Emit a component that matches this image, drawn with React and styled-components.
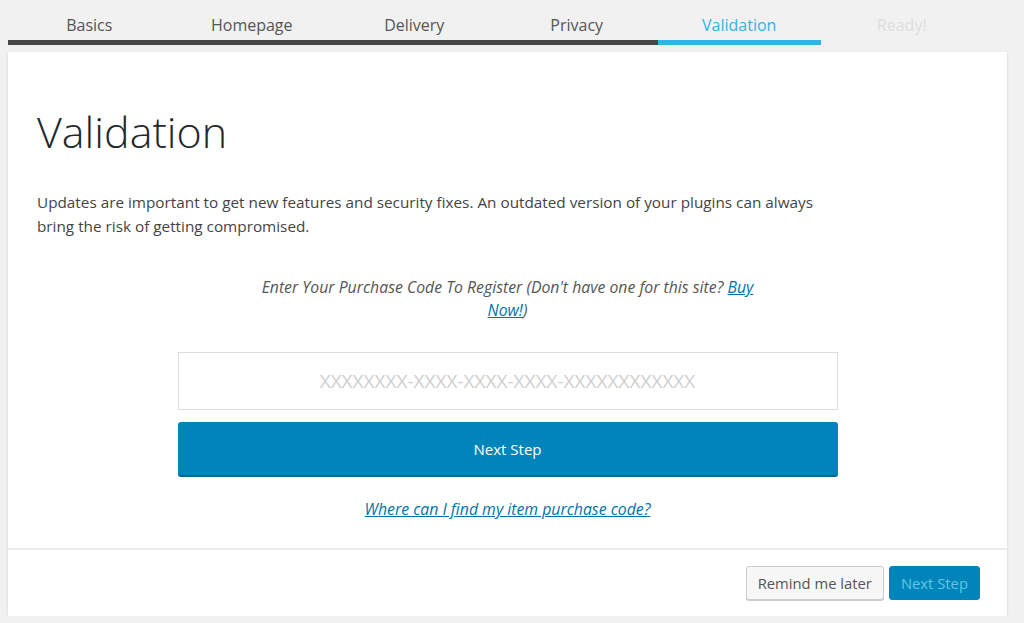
import React from "react";
import styled, { createGlobalStyle } from "styled-components";

const GlobalStyle = createGlobalStyle`
  body {
    margin: 0;
    background: #f1f1f1;
    font-family: "Open Sans", "Noto Sans", sans-serif;
  }
`;

const Page = styled.div`
  padding: 0 8px;
  width: 999px;
`;

const StepList = styled.ol`
  display: flex;
  list-style: none;
  margin: 0;
  padding: 0;
`;

const Step = styled.li`
  width: 162.5px;
  padding-top: 14px;
  padding-bottom: 4px;
  text-align: center;
  font-size: 16px;
  line-height: 22px;
  color: ${(p) => (p.state === "active" ? "#2fb6e6" : p.state === "done" ? "#555" : "#dedede")};
  border-bottom: 5px solid
    ${(p) => (p.state === "active" ? "#2fb6e6" : p.state === "done" ? "#474747" : "transparent")};
`;

const Card = styled.div`
  margin-top: 7px;
  background: #fff;
  box-shadow: 0 1px 3px rgba(0, 0, 0, 0.13);
`;

const Content = styled.section`
  padding: 54px 29px 27px;
`;

const Title = styled.h1`
  margin: 0;
  font-size: 43px;
  line-height: 52px;
  font-weight: 300;
  color: #23282d;
`;

const Intro = styled.p`
  margin: 32px 0 0;
  max-width: 800px;
  font-size: 15.3px;
  line-height: 24px;
  color: #444;
`;

const Register = styled.div`
  width: 660px;
  margin: 38px auto 0;
`;

const Prompt = styled.p`
  margin: 0 auto;
  width: 515px;
  text-align: center;
  font-style: italic;
  font-size: 15.8px;
  line-height: 23px;
  color: #555;
`;

const Link = styled.a`
  color: #0073aa;
  text-decoration: underline;
`;

const CodeInput = styled.input`
  display: block;
  box-sizing: border-box;
  width: 100%;
  height: 58px;
  margin-top: 30px;
  border: 1px solid #ddd;
  background: #fff;
  text-align: center;
  font-family: inherit;
  font-size: 19px;
  outline: none;
  &::placeholder {
    color: #cfcfcf;
  }
`;

const PrimaryButton = styled.button`
  display: block;
  width: 100%;
  height: 55px;
  margin-top: 12px;
  border: none;
  border-bottom: 2px solid #006799;
  border-radius: 3px;
  background: #0085ba;
  color: #fff;
  font-family: inherit;
  font-size: 15px;
`;

const HelpLine = styled.p`
  margin: 21px 0 0;
  text-align: center;
  font-style: italic;
  font-size: 15.8px;
  line-height: 23px;
`;

const Footer = styled.footer`
  display: flex;
  justify-content: flex-end;
  gap: 5px;
  padding: 16px 27px 16px;
  border-top: 2px solid #ececec;
`;

const FooterButton = styled.button`
  height: 34px;
  padding: 0 11px;
  border-radius: 3px;
  font-family: inherit;
  font-size: 14.8px;
  border: 1px solid ${(p) => (p.primary ? "#0085ba" : "#ccc")};
  background: ${(p) => (p.primary ? "#0085ba" : "#f7f7f7")};
  color: ${(p) => (p.primary ? "#66c6e4" : "#555")};
  box-shadow: ${(p) => (p.primary ? "none" : "0 1px 0 #ccc")};
`;

const steps = [
  ["Basics", "done"],
  ["Homepage", "done"],
  ["Delivery", "done"],
  ["Privacy", "done"],
  ["Validation", "active"],
  ["Ready!", "todo"],
];

export default function App() {
  return (
    <Page>
      <GlobalStyle />
      <StepList>
        {steps.map(([name, state]) => (
          <Step key={name} state={state}>
            {name}
          </Step>
        ))}
      </StepList>
      <Card>
        <Content>
          <Title>Validation</Title>
          <Intro>
            Updates are important to get new features and security fixes. An outdated version of
            your plugins can always bring the risk of getting compromised.
          </Intro>
          <Register>
            <Prompt>
              Enter Your Purchase Code To Register (Don't have one for this site?{" "}
              <Link href="#">Buy Now!</Link>)
            </Prompt>
            <CodeInput placeholder="XXXXXXXX-XXXX-XXXX-XXXX-XXXXXXXXXXXX" />
            <PrimaryButton>Next Step</PrimaryButton>
            <HelpLine>
              <Link href="#">Where can I find my item purchase code?</Link>
            </HelpLine>
          </Register>
        </Content>
        <Footer>
          <FooterButton>Remind me later</FooterButton>
          <FooterButton primary>Next Step</FooterButton>
        </Footer>
      </Card>
    </Page>
  );
}
